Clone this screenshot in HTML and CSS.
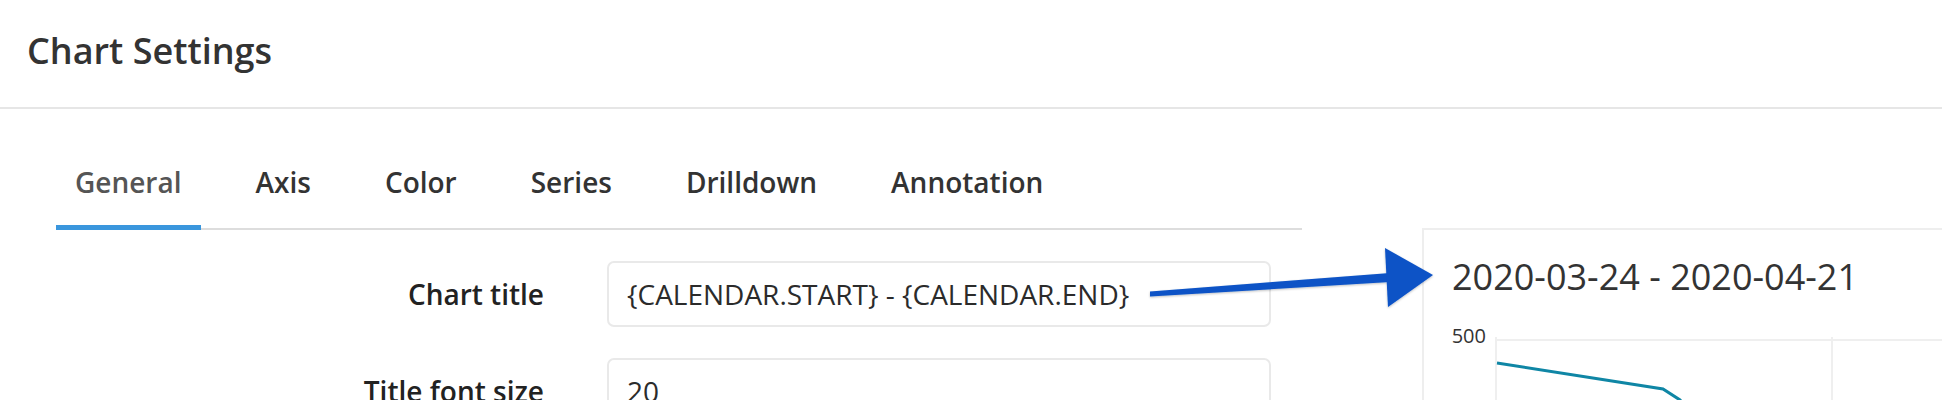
FILE: index.html
```html
<!DOCTYPE html>
<html lang="en">
<head>
<meta charset="utf-8">
<title>Chart Settings</title>
<link rel="stylesheet" href="styles.css">
</head>
<body>
<header class="header">
  <h1 class="header-title">Chart Settings</h1>
</header>
<main class="main">
  <section class="settings">
    <nav class="tabs">
      <div class="tab tab-active">General</div>
      <div class="tab">Axis</div>
      <div class="tab">Color</div>
      <div class="tab">Series</div>
      <div class="tab">Drilldown</div>
      <div class="tab">Annotation</div>
    </nav>
    <div class="form">
      <label class="form-label">Chart title</label>
      <div class="form-input">{CALENDAR.START} - {CALENDAR.END}</div>
      <label class="form-label">Title font size</label>
      <div class="form-input">20</div>
    </div>
  </section>
  <section class="chart-card">
    <div class="chart-title">2020-03-24 - 2020-04-21</div>
    <div class="chart-plot">
      <div class="y-axis"><span class="y-label">500</span></div>
      <svg class="plot-svg" width="460" height="120" viewBox="0 0 460 120">
        <line x1="2" y1="20" x2="460" y2="20" stroke="#efefef" stroke-width="2"/>
        <line x1="2" y1="17" x2="2" y2="120" stroke="#efefef" stroke-width="2"/>
        <line x1="338" y1="17" x2="338" y2="120" stroke="#efefef" stroke-width="2"/>
        <polyline points="3,43 169,69 186,80 200,96" fill="none" stroke="#0f86a5" stroke-width="3"/>
      </svg>
    </div>
  </section>
</main>
<svg class="arrow" width="1942" height="400" viewBox="0 0 1942 400">
  <defs>
    <filter id="sh" x="-10%" y="-10%" width="120%" height="130%">
      <feDropShadow dx="0" dy="1" stdDeviation="1" flood-color="#000" flood-opacity="0.25"/>
    </filter>
  </defs>
  <g filter="url(#sh)" fill="#0a52c6">
    <polygon points="1150,291.5 1390,273 1390,282 1150,296.5"/>
    <polygon points="1385,248 1433,275 1388,307"/>
  </g>
</svg>
</body>
</html>
```
FILE: styles.css
```css
html, body {
  margin: 0;
  padding: 0;
  background: #ffffff;
}
body {
  font-family: "Open Sans", "Noto Sans", "Liberation Sans", sans-serif;
  color: #333333;
  position: relative;
  overflow: hidden;
  width: 1942px;
  height: 400px;
}
.header {
  border-bottom: 2px solid #e6e6e6;
  display: flex;
  align-items: center;
  padding-left: 27px;
  padding-bottom: 6px;
  box-sizing: border-box;
  height: 109px;
}
.header-title {
  margin: 0;
  font-size: 36px;
  font-weight: 600;
  color: #333333;
  line-height: normal;
}
.main {
  display: flex;
  align-items: flex-start;
  padding-left: 56px;
}
.settings {
  width: 1246px;
  flex: none;
}
.tabs {
  display: flex;
  gap: 36px;
  margin-top: 53px;
  border-bottom: 2px solid #dddddd;
}
.tab {
  font-size: 28px;
  font-weight: 600;
  line-height: 40px;
  padding: 0 19px 23px;
  border-bottom: 5px solid transparent;
  margin-bottom: -2px;
  color: #333333;
}
.tab-active {
  color: #555555;
  border-bottom-color: #3a96dd;
}
.form {
  display: grid;
  grid-template-columns: 488px 664px;
  column-gap: 63px;
  row-gap: 31px;
  margin-top: 31px;
  align-items: center;
}
.form-label {
  text-align: right;
  font-size: 28px;
  font-weight: 600;
  color: #222222;
}
.form-input {
  height: 66px;
  box-sizing: border-box;
  border: 2px solid #e9e9e9;
  border-radius: 7px;
  padding-left: 18px;
  display: flex;
  align-items: center;
  font-size: 28px;
  color: #2b2b2b;
}
.chart-card {
  flex: 1;
  margin-left: 120px;
  margin-top: 119px;
  border-top: 2px solid #eeeeee;
  border-left: 2px solid #eeeeee;
  padding-left: 28px;
  padding-top: 22px;
  height: 300px;
}
.chart-title {
  font-size: 36px;
  font-weight: 400;
  color: #333333;
  line-height: normal;
}
.chart-plot {
  display: flex;
  margin-top: 19px;
  margin-left: -28px;
}
.y-axis {
  width: 62px;
  text-align: right;
  padding-top: 4px;
  flex: none;
  margin-right: 8px;
}
.y-label {
  font-size: 20px;
  color: #333333;
  line-height: 24px;
}
.plot-svg {
  display: block;
  flex: none;
}
.arrow {
  position: absolute;
  left: 0;
  top: 0;
  pointer-events: none;
}
```
